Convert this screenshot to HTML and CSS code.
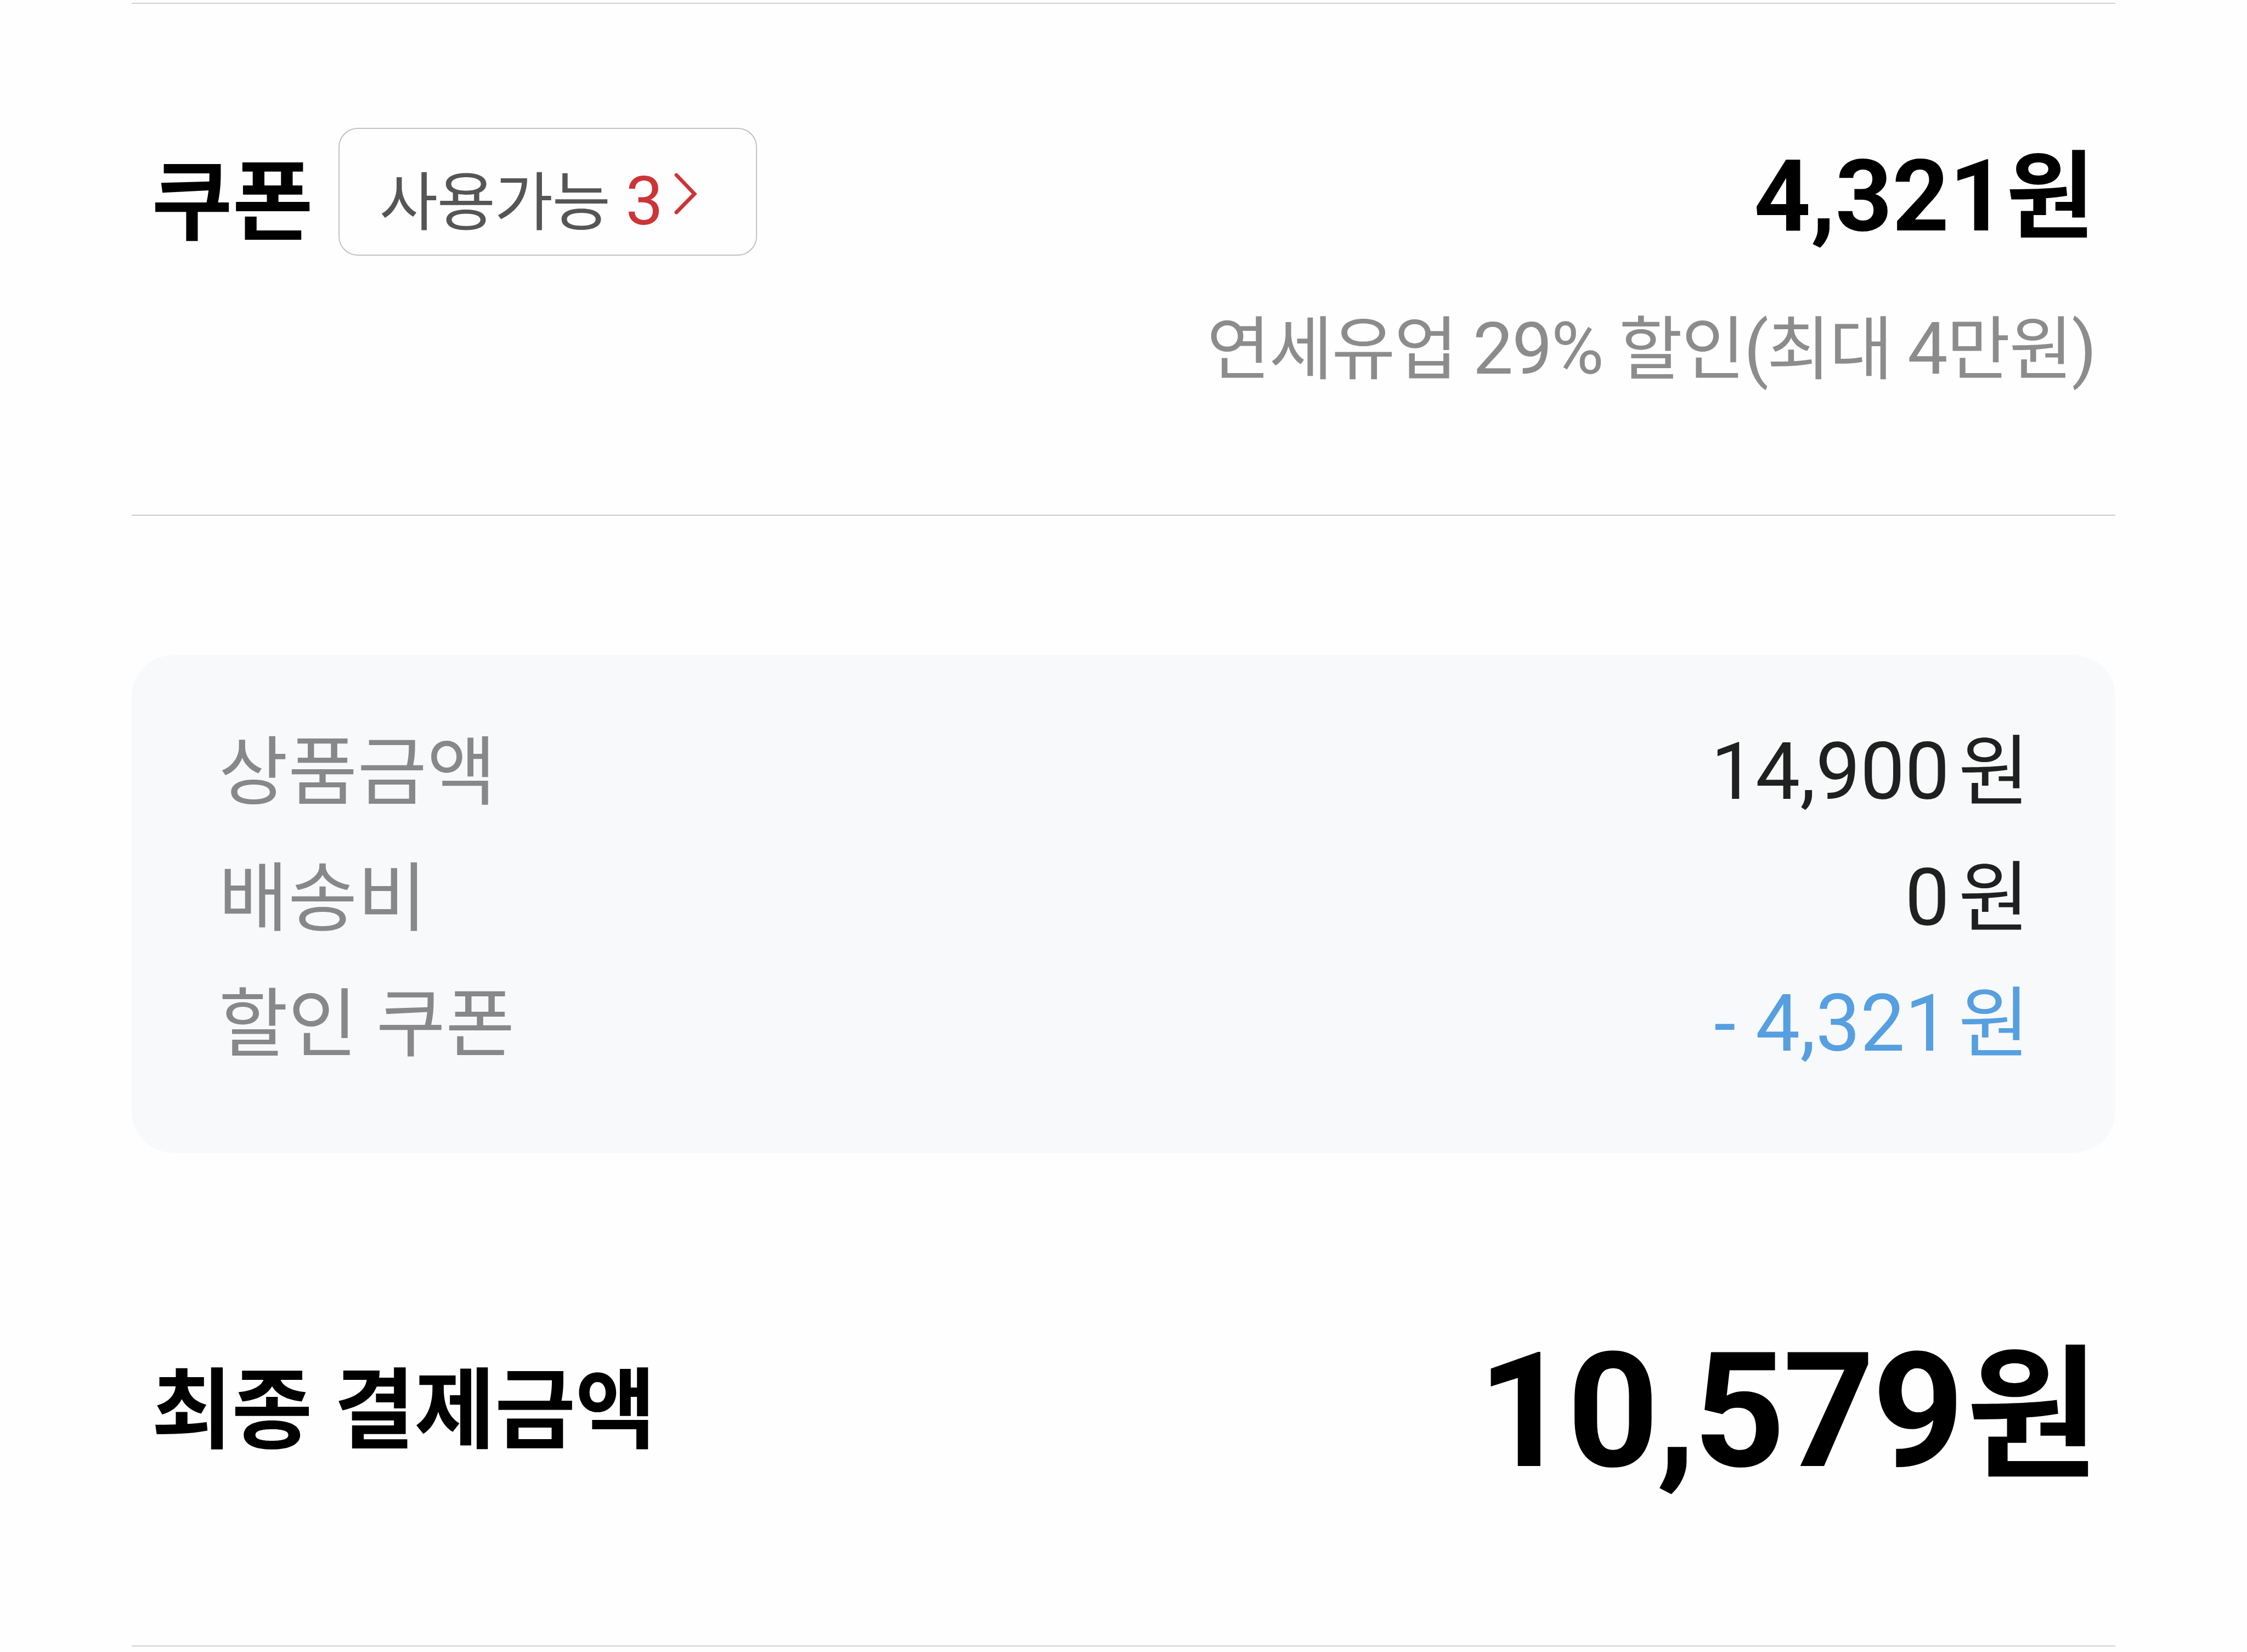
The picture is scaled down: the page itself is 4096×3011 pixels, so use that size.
FILE: index.html
```html
<!DOCTYPE html>
<html lang="ko">
<head>
<meta charset="utf-8">
<title>결제금액</title>
<link rel="stylesheet" href="styles.css">
</head>
<body>
<main class="checkout">
  <section class="coupon">
    <div class="coupon-head">
      <h2 class="title coupon-title">쿠폰</h2>
      <button class="available" type="button">
        <span class="available-text">사용가능 <span class="num count">3</span></span>
        <svg class="chevron" viewBox="0 0 44 78" fill="none"><path d="M5 5 38 39.5 5 73"/></svg>
      </button>
      <strong class="coupon-price"><span class="num">4,321</span>원</strong>
    </div>
    <p class="coupon-note">연세유업 <span class="num">29%</span> 할인<span class="num open">(</span>최대<span class="four"> <span class="num">4</span></span>만원<span class="num">)</span></p>
  </section>
  <dl class="summary">
    <div class="row"><dt>상품금액</dt><dd><span class="num">14,900</span><span class="won">원</span></dd></div>
    <div class="row"><dt>배송비</dt><dd><span class="num">0</span><span class="won">원</span></dd></div>
    <div class="row"><dt>할인 쿠폰</dt><dd class="discount"><span class="num">- 4,321</span><span class="won">원</span></dd></div>
  </dl>
  <section class="total">
    <h2 class="title">최종 결제금액</h2>
    <strong class="total-price"><span class="num">10,579</span><span class="won">원</span></strong>
  </section>
</main>
</body>
</html>
```
FILE: styles.css
```css
* { box-sizing: border-box; }
html { background: #fefefe; }
body { margin: 0; font-family: "Noto Sans CJK KR", sans-serif; color: #000; }
h2, p, dl, dd { margin: 0; }

.checkout { height: 3011px; margin: 0 240px; padding-top: 5px; overflow: hidden; }
/* Latin digits sit on the Hangul baseline without growing the line box */
.num { font-family: Roboto, sans-serif; line-height: 0; }
.title { font-size: 160px; line-height: 200px; font-weight: 700; white-space: nowrap; }

.coupon { height: 935px; padding-top: 226px; border-top: 2px solid #d0d1d4; border-bottom: 2px solid #cbcdd0; }
.coupon-head { display: flex; align-items: center; height: 233px; padding: 0 38px 0 36.5px; }
.coupon-title { padding-top: 10px; }
.available {
  display: flex; align-items: center;
  width: 763px; height: 233px; margin-left: 46.5px; padding: 0 0 0 72px;
  border: 2px solid #c0c2c8; border-radius: 35px; background: none;
  font-family: inherit; font-size: 116px; color: #555;
}
.available-text { line-height: 160px; padding-top: 18px; letter-spacing: -1.7px; word-spacing: -2px; white-space: nowrap; }
.count { font-size: 122.5px; letter-spacing: 0; vertical-align: 1px; color: #cc3437; }
.chevron { width: 44px; height: 78px; margin: 7px 0 0 19px; }
.chevron path { stroke: #cc3437; stroke-width: 6.8; stroke-linecap: round; }
.coupon-price { margin-left: auto; padding-bottom: 11px; font-size: 175px; line-height: 200px; }
.coupon-price .num { font-size: 181px; }

.coupon-note { margin-top: 79.5px; padding-right: 36px; text-align: right; font-size: 126px; line-height: 160px; letter-spacing: -2px; word-spacing: -4px; color: #8c8c8c; white-space: nowrap; }
.coupon-note .num { font-size: 131px; }
.coupon-note .open { letter-spacing: -3px; }
.coupon-note .four { word-spacing: -5px; }

.summary { height: 907px; margin-top: 254px; padding: 86px 156.5px 0 158.5px; border-radius: 76px; background: #f8f9fb; }
.row { display: flex; justify-content: space-between; align-items: baseline; height: 229.5px; font-size: 137.5px; line-height: 230px; white-space: nowrap; color: #888889; }
.row dt { word-spacing: -4.5px; }
.row dd { font-size: 141px; color: #202020; }
.row .num { font-size: 144.7px; }
.row .won { margin-left: 16px; }
.row .discount { color: #569fe0; }

.total { display: flex; justify-content: space-between; align-items: center; height: 900px; padding: 13px 29px 0 36px; border-bottom: 2px solid #d0d1d4; }
.total .title { letter-spacing: -.7px; word-spacing: -4px; }
.total-price { font-size: 264px; line-height: 300px; white-space: nowrap; }
.total-price .num { font-size: 292px; letter-spacing: -4.5px; }
.total-price .won { margin-left: 8px; }
```
